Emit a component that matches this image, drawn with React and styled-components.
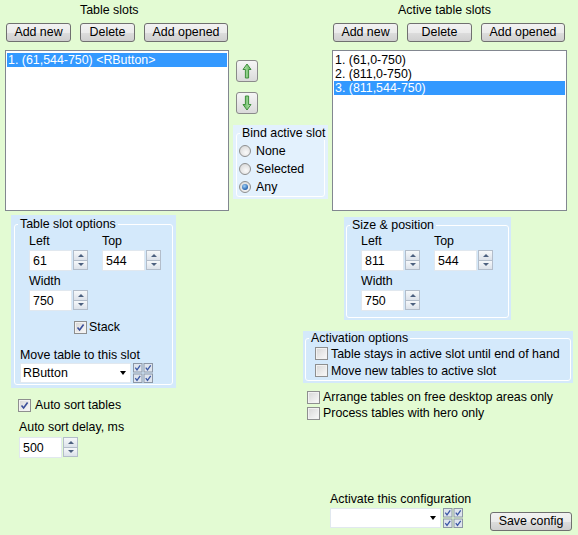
import styled, { createGlobalStyle } from "styled-components";

const GlobalStyle = createGlobalStyle`
    html, body {
        margin: 0;
        padding: 0;
        background: #e3fbd3;
    }
`

const Window = styled.div`
    width: 578px;
    height: 535px;
    background: #e3fbd3;
    display: flex;
    flex-direction: column;
    overflow: hidden;
    font-family: "Liberation Sans", Arial, sans-serif;
    font-size: 12.4px;
    line-height: 14px;
    color: #000;
`

const TopRow = styled.div`
    display: flex;
    flex-shrink: 0;
    height: 211px;
    padding-left: 5px;
`

const SlotColumn = styled.div`
    width: ${p => p.$width}px;
    display: flex;
    flex-direction: column;
`

const ColumnTitle = styled.div`
    height: 15px;
    line-height: 15px;
    margin: 3px 0 5px;
    padding-left: ${p => p.$indent}px;
    white-space: nowrap;
`

const ButtonRow = styled.div`
    display: flex;
    gap: 9px;
    padding-left: 1px;
    margin-bottom: 8px;
`

const Button = styled.button`
    box-sizing: border-box;
    width: ${p => p.$width}px;
    height: 19px;
    padding: 0;
    border: 1px solid #707070;
    border-radius: 3px;
    background: linear-gradient(#f2f2f2 0%, #ebebeb 50%, #dddddd 51%, #cfcfcf 100%);
    font: inherit;
    line-height: 17px;
    color: #000;
    white-space: nowrap;
    flex-shrink: 0;
`

const ListBox = styled.div`
    box-sizing: border-box;
    height: 161px;
    background: #fff;
    border: 1px solid #828790;
    padding: 2px 1px;
`

const ListItem = styled.div`
    height: 14px;
    line-height: 14px;
    padding-left: 1px;
    white-space: nowrap;
    background: ${p => p.$selected ? "#3399ff" : "transparent"};
    color: ${p => p.$selected ? "#fff" : "#000"};
`

const MiddleColumn = styled.div`
    width: 103px;
    display: flex;
    flex-direction: column;
    padding: 60px 0 0 4px;
    box-sizing: border-box;
`

const ArrowButton = styled.button`
    box-sizing: border-box;
    width: 22px;
    height: 22px;
    margin: ${p => p.$first ? "0" : "10px"} 0 0 3px;
    padding: 0;
    border: 1px solid #8a8a8a;
    border-radius: 3px;
    background: linear-gradient(#f6f6f6, #dadada);
    display: flex;
    align-items: center;
    justify-content: center;
`

const Panel = styled.div`
    box-sizing: border-box;
    width: ${p => p.$width}px;
    background: ${p => p.$light ? "#e3f1fd" : "#d4e9fb"};
    padding: ${p => p.$pad};
    margin: ${p => p.$margin};
`

const Frame = styled.fieldset`
    margin: 0;
    padding: 0;
    min-width: 0;
    border: 1px solid #ffffff;
    border-radius: 3px;
`

const Legend = styled.legend`
    margin-left: 3px;
    padding: 0 2px;
    line-height: 14px;
    white-space: nowrap;
`

const FrameBody = styled.div`
    padding: ${p => p.$pad};
`

const RadioRow = styled.label`
    display: flex;
    align-items: center;
    gap: 5px;
    height: 18px;
`

const Radio = styled.span`
    position: relative;
    box-sizing: border-box;
    width: 12px;
    height: 12px;
    border-radius: 50%;
    border: 1px solid #8e8f8f;
    background: radial-gradient(circle at 60% 65%, #fafafa, #d2d2d2);
    flex-shrink: 0;

    &::after {
        content: "";
        display: ${p => p.$checked ? "block" : "none"};
        position: absolute;
        inset: 2px;
        border-radius: 50%;
        background: radial-gradient(circle at 40% 35%, #9fd0f7, #1d5ba9 75%);
    }
`

const CheckRow = styled.label`
    display: flex;
    align-items: center;
    gap: ${p => p.$gap || 3}px;
    height: ${p => p.$height || 14}px;
    margin: ${p => p.$margin || "0"};
    white-space: nowrap;
`

const Box = styled.span`
    box-sizing: border-box;
    width: 13px;
    height: 13px;
    border: 1px solid #8e8f8f;
    background: linear-gradient(135deg, #d6d6d6, #fafafa);
    box-shadow: inset 0 0 0 1px #f2f2f2;
    display: flex;
    align-items: center;
    justify-content: center;
    flex-shrink: 0;
`

const FieldGrid = styled.div`
    display: grid;
    grid-template-columns: 73px auto;
    margin-left: ${p => p.$indent}px;
`

const FieldLabel = styled.div`
    height: 14px;
    margin: ${p => p.$top || 0}px 0 2px;
    white-space: nowrap;
`

const NumberWrap = styled.div`
    display: flex;
    gap: 1px;
    margin: ${p => p.$margin || "0"};
`

const NumberInput = styled.input`
    box-sizing: border-box;
    width: 43px;
    height: 21px;
    margin: 0;
    padding: 0 0 0 3px;
    border: 1px solid #e1e8ef;
    background: #fff;
    font: inherit;
    color: #000;
    outline: none;
`

const Spin = styled.div`
    display: flex;
    flex-direction: column;
    width: 15px;
    height: 20px;
`

const SpinHalf = styled.div`
    flex: 1;
    box-sizing: border-box;
    border: 1px solid #b3bdca;
    background: linear-gradient(#f6f8fa, #dce2ea);
    display: flex;
    align-items: center;
    justify-content: center;

    & + & {
        border-top: none;
    }
`

const SpinArrow = styled.span`
    width: 0;
    height: 0;
    border-left: 3px solid transparent;
    border-right: 3px solid transparent;
    ${p => p.$down ? "border-top: 3px solid #4c607f;" : "border-bottom: 3px solid #4c607f;"}
`

const PlainLabel = styled.div`
    height: 14px;
    margin: ${p => p.$margin};
    white-space: nowrap;
`

const DropRow = styled.div`
    display: flex;
    align-items: flex-start;
    gap: 2px;
    margin-top: 1px;
`

const Dropdown = styled.div`
    box-sizing: border-box;
    width: 111px;
    height: 20px;
    background: #fff;
    border: 1px solid #e1e8ef;
    display: flex;
    align-items: center;
    justify-content: space-between;
    padding: 0 4px 0 2px;
`

const DropArrow = styled.span`
    width: 0;
    height: 0;
    border-left: 3.5px solid transparent;
    border-right: 3.5px solid transparent;
    border-top: 4px solid #000;
`

const BottomRow = styled.div`
    flex: 1;
    display: flex;
`

const LeftBottom = styled.div`
    width: 290px;
    display: flex;
    flex-direction: column;
`

const RightBottom = styled.div`
    flex: 1;
    display: flex;
    flex-direction: column;
`

const ActivateBlock = styled.div`
    margin: auto 0 0 40px;
    padding-bottom: 4px;
`

const SaveButton = styled(Button)`
    margin: 4px 0 0 25px;
`

function ArrowIcon({ down }) {
    const d = "M11 4 L15 9.5 L12.6 9.5 L12.6 18 L9.4 18 L9.4 9.5 L7 9.5 Z"
    return (
        <svg width="20" height="20" viewBox="1 1 20 20">
            <defs>
                <linearGradient id="arrowFill" x1="0" y1="0" x2="1" y2="0">
                    <stop offset="0" stopColor="#b9e6b3" />
                    <stop offset="1" stopColor="#5fb65a" />
                </linearGradient>
            </defs>
            <path d={d} fill="url(#arrowFill)" stroke="#3f8f3c" strokeWidth="1"
                  strokeLinejoin="round" transform={down ? "rotate(180 11 11)" : undefined} />
        </svg>
    )
}

function CheckMark() {
    return (
        <svg width="9" height="9" viewBox="0 0 9 9">
            <path d="M1.5 4.5 L3.6 7 L7.6 1.5" fill="none" stroke="#3b4f9a" strokeWidth="1.6" />
        </svg>
    )
}

function CheckGrid() {
    const cells = [[0, 0], [10.5, 0], [0, 10.5], [10.5, 10.5]]
    return (
        <svg width="20" height="20" viewBox="0 0 20 20">
            {cells.map(([x, y]) => (
                <g key={`${x}-${y}`} transform={`translate(${x} ${y})`}>
                    <rect x="0.5" y="0.5" width="8.5" height="8.5" fill="#dfe5ee" stroke="#8d97a6" />
                    <path d="M2.3 4.6 L4 6.8 L7.2 2.4" fill="none" stroke="#3b58a4" strokeWidth="1.3" />
                </g>
            ))}
        </svg>
    )
}

function CheckBox({ checked }) {
    return <Box>{checked && <CheckMark />}</Box>
}

function NumberField({ value, margin }) {
    return (
        <NumberWrap $margin={margin}>
            <NumberInput value={value} readOnly />
            <Spin>
                <SpinHalf><SpinArrow /></SpinHalf>
                <SpinHalf><SpinArrow $down /></SpinHalf>
            </Spin>
        </NumberWrap>
    )
}

function PositionFields({ left, top, width, indent }) {
    return (
        <FieldGrid $indent={indent}>
            <FieldLabel>Left</FieldLabel>
            <FieldLabel>Top</FieldLabel>
            <NumberField value={left} />
            <NumberField value={top} />
            <FieldLabel $top={3}>Width</FieldLabel>
            <div />
            <NumberField value={width} />
        </FieldGrid>
    )
}

function SlotList({ title, indent, width, deleteWidth, items }) {
    return (
        <SlotColumn $width={width}>
            <ColumnTitle $indent={indent}>{title}</ColumnTitle>
            <ButtonRow>
                <Button $width={65}>Add new</Button>
                <Button $width={deleteWidth}>Delete</Button>
                <Button $width={84}>Add opened</Button>
            </ButtonRow>
            <ListBox>
                {items.map((item, i) => (
                    <ListItem key={i} $selected={item.selected}>{item.text}</ListItem>
                ))}
            </ListBox>
        </SlotColumn>
    )
}

export default function App() {
    return (
        <Window>
            <GlobalStyle />
            <TopRow>
                <SlotList title="Table slots" indent={75} width={224} deleteWidth={55}
                          items={[{ text: "1. (61,544-750) <RButton>", selected: true }]} />
                <MiddleColumn>
                    <ArrowButton $first><ArrowIcon /></ArrowButton>
                    <ArrowButton><ArrowIcon down /></ArrowButton>
                    <Panel $light $width={95} $pad="1px 3px 2px" $margin="11px 0 0">
                        <Frame>
                            <Legend>Bind active slot</Legend>
                            <FrameBody $pad="2px 0 0 2px">
                                <RadioRow><Radio />None</RadioRow>
                                <RadioRow><Radio />Selected</RadioRow>
                                <RadioRow><Radio $checked />Any</RadioRow>
                            </FrameBody>
                        </Frame>
                    </Panel>
                </MiddleColumn>
                <SlotList title="Active table slots" indent={66} width={235} deleteWidth={65}
                          items={[
                              { text: "1. (61,0-750)" },
                              { text: "2. (811,0-750)" },
                              { text: "3. (811,544-750)", selected: true },
                          ]} />
            </TopRow>
            <BottomRow>
                <LeftBottom>
                    <Panel $width={165} $pad="2px 3px 3px" $margin="4px 0 0 11px">
                        <Frame>
                            <Legend>Table slot options</Legend>
                            <FrameBody $pad="3px 0 1px 5px">
                                <PositionFields left="61" top="544" width="750" indent={9} />
                                <CheckRow $margin="9px 0 0 54px" $gap={2}>
                                    <CheckBox checked />Stack
                                </CheckRow>
                                <PlainLabel $margin="14px 0 0">Move table to this slot</PlainLabel>
                                <DropRow>
                                    <Dropdown>RButton<DropArrow /></Dropdown>
                                    <CheckGrid />
                                </DropRow>
                            </FrameBody>
                        </Frame>
                    </Panel>
                    <CheckRow $margin="10px 0 0 18px" $gap={4}>
                        <CheckBox checked />Auto sort tables
                    </CheckRow>
                    <PlainLabel $margin="8px 0 0 19px">Auto sort delay, ms</PlainLabel>
                    <NumberField value="500" margin="3px 0 0 19px" />
                </LeftBottom>
                <RightBottom>
                    <Panel $width={167} $pad="1px 2px 2px" $margin="6px 0 0 54px">
                        <Frame>
                            <Legend>Size &amp; position</Legend>
                            <FrameBody $pad="2px 0 6px 14px">
                                <PositionFields left="811" top="544" width="750" indent={0} />
                            </FrameBody>
                        </Frame>
                    </Panel>
                    <Panel $width={270} $pad="0 2px 2px" $margin="11px 0 0 13px">
                        <Frame>
                            <Legend>Activation options</Legend>
                            <FrameBody $pad="0 0 1px 9px">
                                <CheckRow $height={17}>
                                    <CheckBox />Table stays in active slot until end of hand
                                </CheckRow>
                                <CheckRow $height={17}>
                                    <CheckBox />Move new tables to active slot
                                </CheckRow>
                            </FrameBody>
                        </Frame>
                    </Panel>
                    <CheckRow $height={16} $margin="6px 0 0 17px">
                        <CheckBox />Arrange tables on free desktop areas only
                    </CheckRow>
                    <CheckRow $height={16} $margin="0 0 0 17px">
                        <CheckBox />Process tables with hero only
                    </CheckRow>
                    <ActivateBlock>
                        <PlainLabel $margin="0 0 2px">Activate this configuration</PlainLabel>
                        <DropRow>
                            <Dropdown><span /><DropArrow /></Dropdown>
                            <CheckGrid />
                            <SaveButton $width={82}>Save config</SaveButton>
                        </DropRow>
                    </ActivateBlock>
                </RightBottom>
            </BottomRow>
        </Window>
    )
}
